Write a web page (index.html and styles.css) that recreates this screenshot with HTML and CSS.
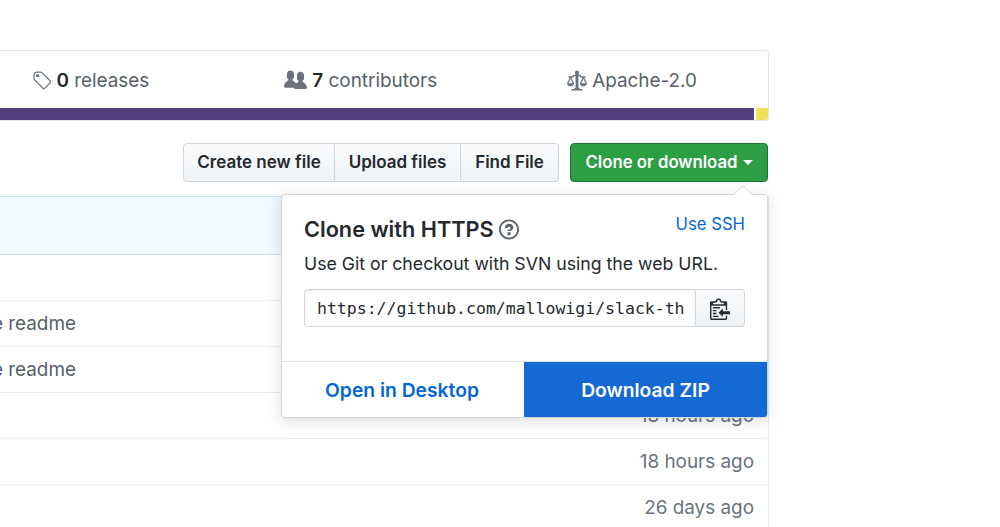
FILE: index.html
```html
<!DOCTYPE html>
<html lang="en">
<head>
<meta charset="utf-8">
<title>Clone or download</title>
<link rel="stylesheet" href="styles.css">
</head>
<body>
<main class="page">
  <section class="summary">
    <ul class="stats">
      <li class="stat stat-releases">
        <svg class="icon icon-tag" viewBox="0 0 14 16"><path d="M7.73 1.73C7.26 1.26 6.62 1 5.96 1H3.5C2.13 1 1 2.13 1 3.5v2.47c0 .66.27 1.3.73 1.77l6.06 6.06c.39.39 1.02.39 1.41 0l4.59-4.59a.996.996 0 0 0 0-1.41L7.73 1.73zM2.38 7.09c-.31-.3-.47-.7-.47-1.13V3.5c0-.88.72-1.59 1.59-1.59h2.47c.42 0 .83.16 1.13.47l6.14 6.13-4.73 4.73-6.13-6.15zM3.01 3h2v2H3V3h.01z"/></svg>
        <span><b>0</b> releases</span>
      </li>
      <li class="stat stat-contributors">
        <svg class="icon icon-people" viewBox="0 0 16 16"><path d="M16 12.999c0 .439-.45 1-1 1H7.995c-.539 0-.994-.447-.995-.999H1c-.54 0-1-.561-1-1 0-2.634 3-4 3-4s.229-.409 0-1c-.841-.621-1.058-.59-1-3 .058-2.419 1.367-3 2.5-3s2.442.58 2.5 3c.058 2.41-.159 2.379-1 3-.229.59 0 1 0 1s1.549.711 2.42 2.088C9.196 9.369 10 8.999 10 8.999s.229-.409 0-1c-.841-.62-1.058-.59-1-3 .058-2.419 1.367-3 2.5-3s2.437.581 2.495 3c.059 2.41-.158 2.38-1 3-.229.59 0 1 0 1s3.005 1.366 3.005 4z"/></svg>
        <span><b>7</b> contributors</span>
      </li>
      <li class="stat stat-license">
        <svg class="icon icon-law" viewBox="0 0 14 16"><path d="M7 4c-.83 0-1.5-.67-1.5-1.5S6.17 1 7 1s1.5.67 1.5 1.5S7.83 4 7 4zm7 6c0 1.11-.89 2-2 2h-1c-1.11 0-2-.89-2-2l2-4h-1c-.55 0-1-.45-1-1H8v8c.42 0 1 .45 1 1h1c.42 0 1 .45 1 1H3c0-.55.58-1 1-1h1c0-.55.58-1 1-1h.03L6 5H5c0 .55-.45 1-1 1H3l2 4c0 1.11-.89 2-2 2H2c-1.11 0-2-.89-2-2l2-4H1V5h3c0-.55.45-1 1-1h4c.55 0 1 .45 1 1h3v1h-1l2 4zM2.5 7L1 10h3L2.5 7zM13 10l-1.5-3-1.5 3h3z"/></svg>
        <span>Apache-2.0</span>
      </li>
    </ul>
    <div class="langbar"><span class="lang-main"></span><span class="lang-other"></span></div>
  </section>

  <section class="toolbar">
    <div class="btn-group">
      <a class="btn btn-create">Create new file</a>
      <a class="btn btn-upload">Upload files</a>
      <a class="btn btn-find">Find File</a>
    </div>
    <a class="btn-clone">Clone or download<span class="caret"></span></a>

    <div class="popup">
      <div class="popup-body">
        <div class="popup-head">
          <h3 class="popup-title">Clone with HTTPS
            <svg class="icon-help" viewBox="0 0 14 16"><path d="M6 10h2v2H6v-2zm4-3.5C10 8.64 8 9 8 9H6c0-.55.45-1 1-1h.5c.28 0 .5-.22.5-.5v-1c0-.28-.22-.5-.5-.5h-1c-.28 0-.5.22-.5.5V7H4c0-1.5 1.5-3 3-3s3 1 3 2.5zM7 2.3c3.14 0 5.7 2.56 5.7 5.7s-2.56 5.7-5.7 5.7A5.71 5.71 0 0 1 1.3 8c0-3.14 2.56-5.7 5.7-5.7zM7 1C3.14 1 0 4.14 0 8s3.14 7 7 7 7-3.14 7-7-3.14-7-7-7z"/></svg>
          </h3>
          <a class="use-ssh">Use SSH</a>
        </div>
        <p class="popup-text">Use Git or checkout with SVN using the web URL.</p>
        <div class="url-row">
          <div class="url-input"><span class="url-text">https://github.com/mallowigi/slack-themes.git</span></div>
          <button class="copy-btn" type="button" aria-label="Copy">
            <svg class="icon-clippy" viewBox="0 0 14 16"><path d="M2 13h4v1H2v-1zm5-6H2v1h5V7zm2 3V8l-3 3 3 3v-2h5v-2H9zM4.5 9H2v1h2.5V9zM2 12h2.5v-1H2v1zm9 1h1v2c-.02.28-.11.52-.3.7-.19.18-.42.28-.7.3H1c-.55 0-1-.45-1-1V4c0-.55.45-1 1-1h3c0-1.11.89-2 2-2 1.11 0 2 .89 2 2h3c.55 0 1 .45 1 1v5h-1V6H1v9h10v-2zM2 5h8c0-.55-.45-1-1-1H8c-.55 0-1-.45-1-1s-.45-1-1-1-1 .45-1 1-.45 1-1 1H3c-.55 0-1 .45-1 1z"/></svg>
          </button>
        </div>
      </div>
      <div class="popup-foot">
        <a class="foot-desktop">Open in Desktop</a>
        <a class="foot-zip">Download ZIP</a>
      </div>
    </div>
  </section>

  <section class="files">
    <div class="commit-tease"></div>
    <div class="file-row"></div>
    <div class="file-row"><span class="msg"><span>Update the readme</span></span></div>
    <div class="file-row"><span class="msg"><span>Update the readme</span></span></div>
    <div class="file-row"><time class="age">18 hours ago</time></div>
    <div class="file-row"><time class="age">18 hours ago</time></div>
    <div class="file-row"><time class="age">26 days ago</time></div>
  </section>
</main>
</body>
</html>
```

FILE: styles.css
```css
* { box-sizing: border-box; }

html, body {
  margin: 0;
  height: 100%;
  overflow: hidden;
  background: #fff;
}

body {
  font-family: Inter, "Liberation Sans", sans-serif;
  font-size: 18.9px;
  color: #24292e;
}

.page {
  width: 769px;
  padding-top: 50px;
}

/* Summary box */
.summary {
  height: 71px;
  display: flex;
  flex-direction: column;
  border: 1px solid #e1e4e8;
  border-left: 0;
  border-radius: 0 4px 4px 0;
}

.stats {
  flex: 1;
  margin: 0;
  padding: 2px 0 0;
  list-style: none;
  display: flex;
  align-items: center;
  color: #586069;
}

.stat {
  display: flex;
  align-items: center;
  gap: 5px;
  line-height: 20px;
}

.stat b {
  font-weight: 600;
  color: #24292e;
}

.stat-releases { margin-left: 32px; }
.stat-contributors { margin-left: 135px; }
.stat-license { margin-left: 130px; }

.icon {
  fill: #6a737d;
  flex: none;
}

.icon-tag { width: 19.4px; height: 22px; }
.icon-people { width: 23px; height: 23px; }
.icon-law { width: 20px; height: 23px; }

.langbar {
  height: 12px;
  display: flex;
  gap: 2px;
  flex: none;
}

.lang-main { flex: 1; background: #563d7c; }
.lang-other { width: 12px; background: #f1e05a; border-bottom-right-radius: 3px; }

/* Toolbar */
.toolbar {
  position: relative;
  display: flex;
  justify-content: flex-end;
  gap: 11px;
  padding: 22px 1px 0 0;
  height: 75px;
}

.btn-group { display: flex; height: 39px; }

.btn {
  display: flex;
  align-items: center;
  justify-content: center;
  padding-bottom: 2px;
  font-weight: 600;
  font-size: 17px;
  color: #24292e;
  border: 1px solid #d1d5da;
  border-left-width: 0;
  background: linear-gradient(#fafbfc, #eff3f6);
}

.btn-create { width: 152px; border-left-width: 1px; border-radius: 4px 0 0 4px; }
.btn-upload { width: 126px; }
.btn-find { width: 98px; border-radius: 0 4px 4px 0; }

.btn-clone {
  width: 198px;
  height: 39px;
  display: flex;
  align-items: center;
  justify-content: center;
  gap: 5px;
  padding-bottom: 2px;
  font-size: 16.8px;
  font-weight: 600;
  color: #fff;
  background: #2c9f45;
  border: 1px solid #22723a;
  border-radius: 4px;
}

.caret {
  width: 0;
  height: 0;
  margin-top: 2px;
  border: 5px solid transparent;
  border-top-color: #fff;
  border-bottom-width: 0;
}

/* Clone popup */
.popup {
  position: absolute;
  top: 73px;
  right: 1px;
  width: 487px;
  height: 224px;
  display: flex;
  flex-direction: column;
  background: #fff;
  border: 1px solid #d1d5da;
  border-radius: 4px;
  box-shadow: 0 3px 14px rgba(27, 31, 35, 0.15);
  z-index: 2;
}

.popup::before,
.popup::after {
  content: "";
  position: absolute;
  right: 14px;
  width: 0;
  height: 0;
  border: 10px solid transparent;
  border-top-width: 0;
}

.popup::before { top: -10px; border-bottom-color: #d1d5da; }
.popup::after { top: -9px; border-bottom-color: #fff; }

.popup-body {
  flex: 1;
  padding: 16px 22px 0;
}

.popup-head {
  display: flex;
  justify-content: space-between;
  align-items: flex-start;
}

.popup-title {
  margin: 0;
  display: flex;
  align-items: center;
  gap: 5px;
  font-size: 21.7px;
  line-height: 36px;
  font-weight: 600;
}

.icon-help {
  width: 20px;
  height: 23px;
  fill: #586069;
}

.use-ssh {
  font-size: 16.7px;
  line-height: 26px;
  color: #0366d6;
}

.popup-text {
  margin: 5px 0 0;
  line-height: 24px;
  font-size: 17.7px;
  color: #24292e;
}

.url-row {
  display: flex;
  margin-top: 13px;
  height: 38px;
}

.url-input {
  width: 392px;
  padding: 0 11px 0 12px;
  display: flex;
  align-items: center;
  overflow: hidden;
  white-space: nowrap;
  font-family: "DejaVu Sans Mono", "Liberation Mono", monospace;
  font-size: 16.5px;
  color: #24292e;
  border: 1px solid #d1d5da;
  border-radius: 4px 0 0 4px;
  box-shadow: inset 0 1px 2px rgba(27, 31, 35, 0.075);
}

.url-text { display: block; overflow: hidden; }

.copy-btn {
  width: 49px;
  padding: 0;
  display: flex;
  align-items: center;
  justify-content: center;
  border: 1px solid #d1d5da;
  border-left-width: 0;
  border-radius: 0 4px 4px 0;
  background: linear-gradient(#fafbfc, #eff3f6);
}

.icon-clippy {
  width: 20px;
  height: 23px;
  fill: #24292e;
}

.popup-foot {
  height: 56px;
  display: flex;
  border-top: 1px solid #e1e4e8;
  font-weight: 600;
  font-size: 19.3px;
}

.foot-desktop,
.foot-zip {
  display: flex;
  align-items: center;
  justify-content: center;
}

.foot-desktop { width: 242px; padding-right: 2px; color: #0366d6; }

.foot-zip {
  flex: 1;
  color: #fff;
  background: #1469d3;
  border-bottom-right-radius: 3px;
}

/* File table */
.files {
  border-right: 1px solid #eaecef;
}

.commit-tease {
  height: 58.6px;
  background: #f1f8ff;
  border-top: 1px solid #c8e1ff;
  border-bottom: 1px solid #c8e1ff;
}

.file-row {
  height: 46px;
  padding: 0 14px 0 0;
  display: flex;
  align-items: center;
  justify-content: space-between;
  border-bottom: 1px solid #eaecef;
  color: #6a737d;
}

.msg {
  width: 76px;
  display: flex;
  justify-content: flex-end;
  white-space: nowrap;
  color: #586069;
}

.age { margin-left: auto; }
```
